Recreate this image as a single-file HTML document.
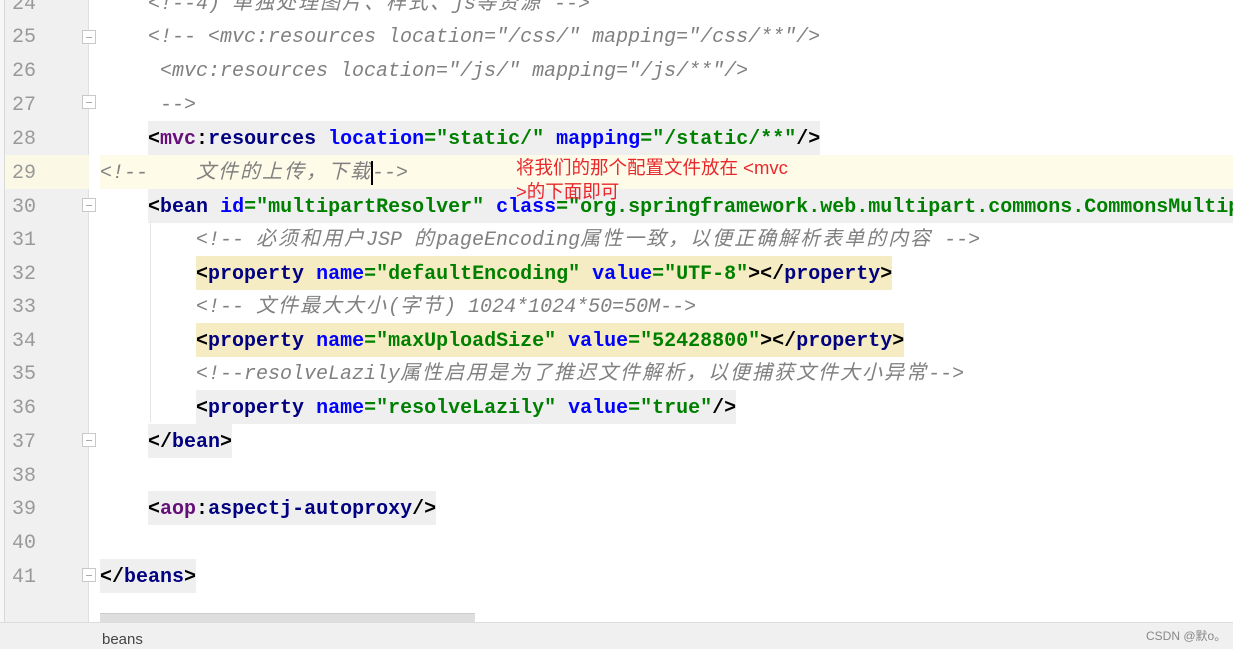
<!DOCTYPE html>
<html><head><meta charset="utf-8"><style>
*{margin:0;padding:0;box-sizing:border-box}
body{width:1233px;height:649px;overflow:hidden;background:#fff;position:relative;font-family:"Liberation Mono","Noto Sans CJK SC",monospace;font-size:20px}
.gut{position:absolute;left:5px;top:0;width:84px;height:622px;background:#f0f0f0;border-right:1px solid #e0e0e0}
.lstrip{position:absolute;left:0;top:0;width:5px;height:622px;background:#f7f7f7;border-right:1px solid #d8d8d8}
.ln{position:absolute;left:12px;width:40px;color:#999;height:34px;line-height:34px;padding-top:2px}
.row{position:absolute;left:100px;right:0;overflow:hidden;height:34px;line-height:34px;white-space:pre;padding-top:2px}
.bg{position:absolute;height:34px}
.t{color:#000080;font-weight:bold}
.p{color:#660e7a;font-weight:bold}
.a{color:#0000ff;font-weight:bold}
.v{color:#008000;font-weight:bold}
.k{color:#000;font-weight:bold}
.cm{color:#808080;font-style:italic}
.c{letter-spacing:2px}
.fold{position:absolute;left:82px;width:14px;height:14px;border:1px solid #c8c8c8;background:#fff}
.fold:after{content:"";position:absolute;left:3px;top:6px;width:6px;height:1px;background:#aaa}
.status{position:absolute;left:0;top:622px;width:1233px;height:27px;background:#f0f0f0;border-top:1px solid #ddd;font-family:"Liberation Sans",sans-serif;font-size:15px;color:#444}
</style></head><body>
<div class="lstrip"></div>
<div class="gut"></div>
<div class="bg" style="left:5px;top:155px;width:84px;background:#fbf8e6"></div>
<div class="bg" style="left:100px;top:155px;width:1133px;background:#fefbe8"></div>
<div class="bg" style="left:148px;top:121px;width:672px;background:#efefef"></div>
<div class="bg" style="left:148px;top:189px;width:1085px;background:#efefef"></div>
<div class="bg" style="left:196px;top:256px;width:696px;background:#f5ecc3"></div>
<div class="bg" style="left:196px;top:323px;width:708px;background:#f5ecc3"></div>
<div class="bg" style="left:196px;top:390px;width:540px;background:#efefef"></div>
<div class="bg" style="left:148px;top:424px;width:84px;background:#efefef"></div>
<div class="bg" style="left:148px;top:491px;width:288px;background:#efefef"></div>
<div class="bg" style="left:100px;top:559px;width:96px;background:#efefef"></div>
<div style="position:absolute;left:150px;top:222px;width:1px;height:200px;background:#e4e4e4"></div>

<div class="ln" style="top:-14px">24</div>
<div class="ln" style="top:19px">25</div>
<div class="ln" style="top:53px">26</div>
<div class="ln" style="top:87px">27</div>
<div class="ln" style="top:121px">28</div>
<div class="ln" style="top:155px">29</div>
<div class="ln" style="top:189px">30</div>
<div class="ln" style="top:222px">31</div>
<div class="ln" style="top:256px">32</div>
<div class="ln" style="top:289px">33</div>
<div class="ln" style="top:323px">34</div>
<div class="ln" style="top:356px">35</div>
<div class="ln" style="top:390px">36</div>
<div class="ln" style="top:424px">37</div>
<div class="ln" style="top:458px">38</div>
<div class="ln" style="top:491px">39</div>
<div class="ln" style="top:525px">40</div>
<div class="ln" style="top:559px">41</div>

<div class="fold" style="top:30px"></div>
<div class="fold" style="top:95px"></div>
<div class="fold" style="top:198px"></div>
<div class="fold" style="top:433px"></div>
<div class="fold" style="top:568px"></div>

<div class="row cm" style="top:-14px">    &lt;!--4) <span class="c">单独处理图片、样式、</span>js<span class="c">等资源</span> --&gt;</div>
<div class="row cm" style="top:19px">    &lt;!-- &lt;mvc:resources location="/css/" mapping="/css/**"/&gt;</div>
<div class="row cm" style="top:53px">     &lt;mvc:resources location="/js/" mapping="/js/**"/&gt;</div>
<div class="row cm" style="top:87px">     --&gt;</div>
<div class="row" style="top:121px">    <span class="k">&lt;</span><span class="p">mvc</span><span class="k">:</span><span class="t">resources</span> <span class="a">location</span><span class="v">="static/"</span> <span class="a">mapping</span><span class="v">="/static/**"</span><span class="k">/&gt;</span></div>
<div class="row cm" style="top:155px">&lt;!--    <span class="c">文件的上传，下载</span>--&gt;</div>
<div style="position:absolute;left:371px;top:161px;width:2px;height:24px;background:#000"></div>
<div class="row" style="top:189px">    <span class="k">&lt;</span><span class="t">bean</span> <span class="a">id</span><span class="v">="multipartResolver"</span> <span class="a">class</span><span class="v">="org.springframework.web.multipart.commons.CommonsMultipartResolver"</span></div>
<div class="row cm" style="top:222px">        &lt;!-- <span class="c">必须和用户</span>JSP <span class="c">的</span>pageEncoding<span class="c">属性一致，以便正确解析表单的内容</span> --&gt;</div>
<div class="row" style="top:256px">        <span class="k">&lt;</span><span class="t">property</span> <span class="a">name</span><span class="v">="defaultEncoding"</span> <span class="a">value</span><span class="v">="UTF-8"</span><span class="k">&gt;&lt;/</span><span class="t">property</span><span class="k">&gt;</span></div>
<div class="row cm" style="top:289px">        &lt;!-- <span class="c">文件最大大小</span>(<span class="c">字节</span>) 1024*1024*50=50M--&gt;</div>
<div class="row" style="top:323px">        <span class="k">&lt;</span><span class="t">property</span> <span class="a">name</span><span class="v">="maxUploadSize"</span> <span class="a">value</span><span class="v">="52428800"</span><span class="k">&gt;&lt;/</span><span class="t">property</span><span class="k">&gt;</span></div>
<div class="row cm" style="top:356px">        &lt;!--resolveLazily<span class="c">属性启用是为了推迟文件解析，以便捕获文件大小异常</span>--&gt;</div>
<div class="row" style="top:390px">        <span class="k">&lt;</span><span class="t">property</span> <span class="a">name</span><span class="v">="resolveLazily"</span> <span class="a">value</span><span class="v">="true"</span><span class="k">/&gt;</span></div>
<div class="row" style="top:424px">    <span class="k">&lt;/</span><span class="t">bean</span><span class="k">&gt;</span></div>
<div class="row" style="top:491px">    <span class="k">&lt;</span><span class="p">aop</span><span class="k">:</span><span class="t">aspectj-autoproxy</span><span class="k">/&gt;</span></div>
<div class="row" style="top:559px"><span class="k">&lt;/</span><span class="t">beans</span><span class="k">&gt;</span></div>

<div style="position:absolute;left:516px;top:156px;color:#e8282d;font-family:'Liberation Sans','Noto Sans CJK SC',sans-serif;font-size:18.5px;line-height:24px;white-space:nowrap">将我们的那个配置文件放在 &lt;mvc<br>&gt;的下面即可</div>

<div style="position:absolute;left:100px;top:613px;width:375px;height:9px;background:#dedede;border-top:1px solid #ccc"></div>
<div class="status"><span style="position:absolute;left:102px;top:8px">beans</span><span style="position:absolute;left:1146px;top:4px;font-size:12px;color:#888;font-family:'Liberation Sans','Noto Sans CJK SC',sans-serif">CSDN @默o。</span></div>
</body></html>
